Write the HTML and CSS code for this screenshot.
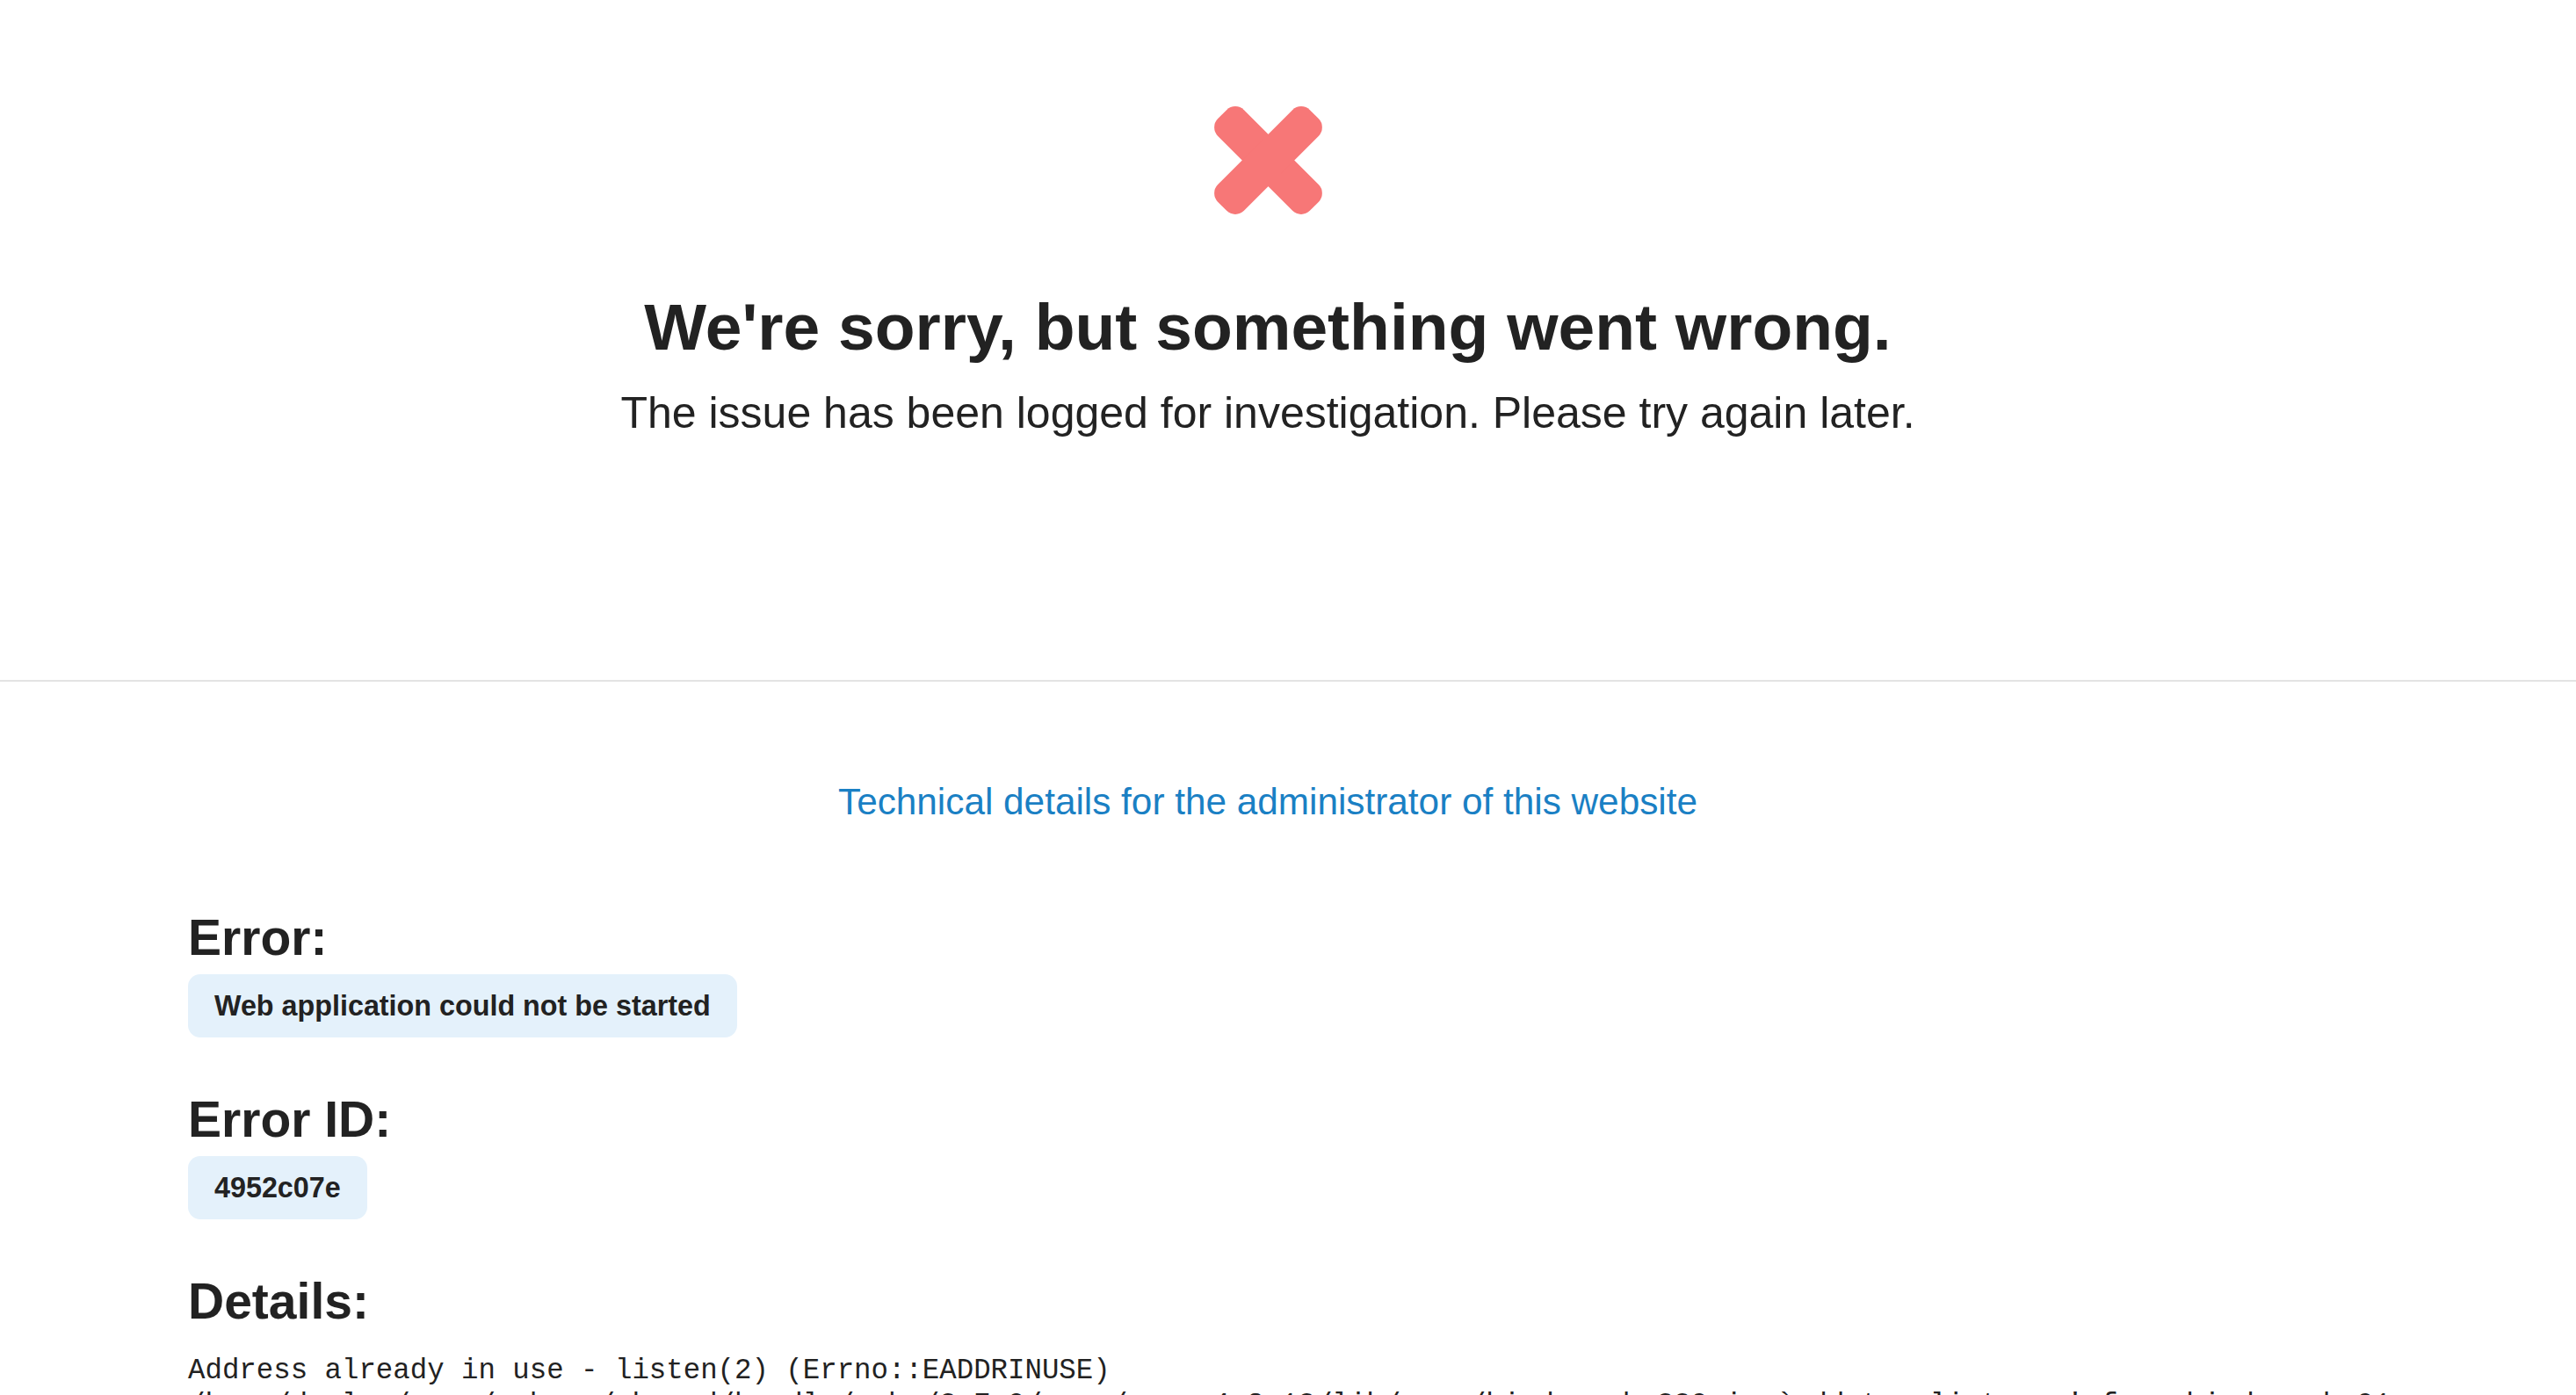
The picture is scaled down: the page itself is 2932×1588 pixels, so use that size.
FILE: index.html
```html
<!DOCTYPE html>
<html lang="en">
<head>
<meta charset="utf-8">
<title>We're sorry, but something went wrong</title>
<link rel="stylesheet" href="styles.css">
</head>
<body>
<section class="summary">
  <svg class="error-icon" width="123" height="123" viewBox="-61.5 -61.5 123 123" aria-hidden="true">
    <g fill="#f77777">
      <rect x="-74" y="-21" width="148" height="42" rx="14" transform="rotate(45)"/>
      <rect x="-74" y="-21" width="148" height="42" rx="14" transform="rotate(-45)"/>
    </g>
  </svg>
  <h1 class="title">We're sorry, but something went wrong.</h1>
  <p class="subtitle">The issue has been logged for investigation. Please try again later.</p>
</section>
<hr class="separator">
<section class="technical">
  <a class="tech-link" href="#details">Technical details for the administrator of this website</a>
  <div class="info">
    <h2 class="label">Error:</h2>
    <div class="badge">Web application could not be started</div>
    <h2 class="label label-gap">Error ID:</h2>
    <div class="badge">4952c07e</div>
    <h2 class="label label-gap" id="details">Details:</h2>
<pre class="trace">Address already in use - listen(2) (Errno::EADDRINUSE)
/home/deploy/apps/webapp/shared/bundle/ruby/2.7.0/gems/puma-4.3.12/lib/puma/binder.rb:229:in `add_tcp_listener' from binder.rb:91
  /home/deploy/apps/webapp/shared/bundle/ruby/2.7.0/gems/puma-4.3.12/lib/puma/binder.rb:91:in `block in parse'</pre>
  </div>
</section>
</body>
</html>
```
FILE: styles.css
```css
html, body {
  margin: 0;
  padding: 0;
  background: #ffffff;
}

body {
  font-family: "Liberation Sans", Arial, Helvetica, sans-serif;
  color: #222222;
}

.summary {
  padding: 121px 46px 274px 0;
  text-align: center;
}

.error-icon {
  display: block;
  margin: 0 auto;
}

.title {
  margin: 83px 0 0;
  font-size: 75px;
  line-height: 90px;
  font-weight: bold;
}

.subtitle {
  margin: 23px 0 0;
  font-size: 50px;
  line-height: 60px;
  font-weight: normal;
}

.separator {
  margin: 0;
  border: 0;
  border-top: 2px solid #e3e3e3;
  height: 0;
}

.technical {
  padding: 112px 260px 0 214px;
}

.tech-link {
  display: block;
  text-align: center;
  font-size: 42.3px;
  line-height: 50px;
  color: #1a80c4;
  text-decoration: none;
}

.info {
  margin-top: 95px;
  display: flex;
  flex-direction: column;
  align-items: flex-start;
}

.label {
  margin: 0;
  font-size: 57px;
  line-height: 68px;
  font-weight: bold;
}

.label-gap {
  margin-top: 59px;
}

.badge {
  margin-top: 8px;
  padding: 17px 30px;
  background: #e4f1fb;
  border-radius: 14px;
  font-size: 32.3px;
  line-height: 38px;
  font-weight: bold;
}

.trace {
  margin: 26px 0 0;
  font-family: "Liberation Mono", "Courier New", monospace;
  font-size: 32.4px;
  line-height: 39px;
  color: #222222;
  white-space: pre;
}
```
